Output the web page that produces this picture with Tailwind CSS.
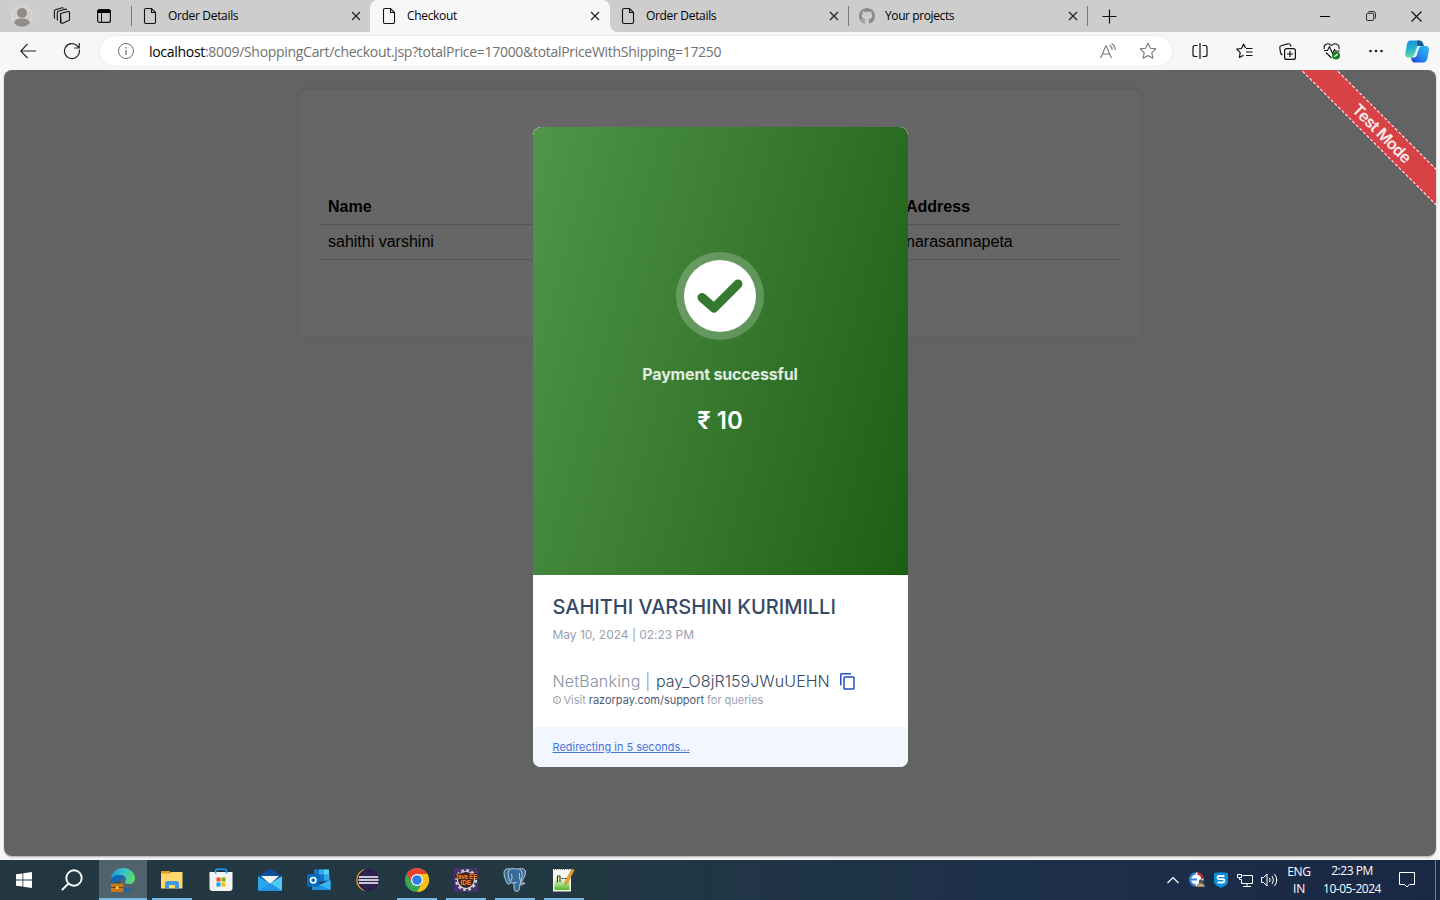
<!DOCTYPE html>
<html lang="en">
<head>
<meta charset="utf-8">
<title>Checkout</title>
<script src="https://cdn.jsdelivr.net/npm/@tailwindcss/browser@4"></script>
</head>
<body class="w-[1440px] h-[900px] overflow-hidden flex flex-col bg-[#f7f7f7] font-['Open_Sans','Noto_Sans',sans-serif] text-black">
<svg class="hidden">
  <symbol id="page" viewBox="0 0 14 18"><path d="M1.500 3a1.500 1.500 0 0 1 1.500-1.500h5.500l4 4v9.500a1.500 1.500 0 0 1-1.500 1.500H3a1.500 1.500 0 0 1-1.500-1.500zM8.500 1.500v4h4" fill="none" stroke="#111" stroke-width="1.100"/></symbol>
  <symbol id="x" viewBox="0 0 10 10"><path d="M1 1l8 8M9 1L1 9" fill="none" stroke="#222" stroke-width="1.200"/></symbol>
</svg>

<!-- Tab strip -->
<header class="h-8 shrink-0 flex bg-[#cdcdcd] text-[12px]">
  <div class="w-[131px] flex items-center pl-[11px]">
    <svg class="w-[22px] h-[22px]" viewBox="0 0 22 22"><circle cx="11" cy="11" r="10.500" fill="#d3d0cd" stroke="#dcdad7"/><circle cx="11" cy="8" r="5" fill="#918c88"/><path d="M3 18c1-3.500 4-4.500 8-4.500s7 1 8 4.500a10.500 10.500 0 0 1-16 0z" fill="#918c88"/></svg>
    <svg class="w-[18px] h-[18px] ml-5" viewBox="0 0 18 18" fill="none" stroke="#111" stroke-width="1.100" stroke-linejoin="round"><path d="M7.500 6.500l7.500-2q1.500-.2 1.500 1.200v6.800q0 .8-.8 1.100l-6 2.600q-1.700.5-1.700-1zM4.800 13.500q-.5-.3-.5-1V5.500q0-1 1-1.300l6.800-2q1.200-.2 1.500.8M2 11.500q-.6-.4-.6-1.200V4q0-1 1-1.300L9 .8q1-.2 1.400.6"/><path d="M7.500 7v9"/></svg>
    <svg class="w-4 h-4 ml-[25px]" viewBox="0 0 16 16"><rect x="1.600" y="1.600" width="12.800" height="12.800" rx="2" fill="none" stroke="#111" stroke-width="1.200"/><path d="M1.500 5V3.500a2 2 0 0 1 2-2h9a2 2 0 0 1 2 2V5z" fill="#000"/><path d="M5.500 5v9.500" stroke="#111"/></svg>
  </div>
  <div class="w-px h-5 mt-1.5 bg-[#777]"></div>
  <div class="w-[238px] flex items-center pl-[11px] pr-[9.500px] bg-[#cdcdcd]">
    <svg class="w-[14px] h-[18px]"><use href="#page"/></svg><span class="ml-[11px] flex-1 whitespace-nowrap tracking-[-0.33px]">Order Details</span><svg class="w-[10px] h-[10px]"><use href="#x"/></svg>
  </div>
  <div class="w-[240px] flex bg-[#f7f7f7]">
    <div class="w-2 -ml-2 bg-[#cdcdcd] rounded-br-lg"></div>
    <div class="flex-1 flex bg-[#cdcdcd]"><div class="flex-1 flex items-center rounded-t-lg bg-[#f7f7f7] pl-3 pr-[10.500px]">
      <svg class="w-[14px] h-[18px]"><use href="#page"/></svg><span class="ml-[11px] flex-1 whitespace-nowrap tracking-[-0.33px]">Checkout</span><svg class="w-[10px] h-[10px]"><use href="#x"/></svg>
    </div></div>
  </div>
  <div class="w-[238px] flex bg-[#f7f7f7]"><div class="flex-1 flex items-center pl-[11px] pr-[9.500px] bg-[#cdcdcd] rounded-bl-lg">
    <svg class="w-[14px] h-[18px]"><use href="#page"/></svg><span class="ml-[11px] flex-1 whitespace-nowrap tracking-[-0.33px]">Order Details</span><svg class="w-[10px] h-[10px]"><use href="#x"/></svg>
  </div></div>
  <div class="w-px h-5 mt-1.5 bg-[#777]"></div>
  <div class="w-[238px] flex items-center pl-[10px] pr-[9.500px]">
    <svg class="w-4 h-4" viewBox="0 0 16 16"><path fill="#8b8b8b" d="M8 0C3.580 0 0 3.580 0 8c0 3.540 2.290 6.530 5.470 7.590.4.070.55-.17.55-.38 0-.19-.01-.82-.01-1.490-2.010.37-2.530-.49-2.690-.94-.09-.23-.48-.94-.82-1.130-.28-.15-.68-.52-.01-.53.63-.01 1.080.58 1.230.82.72 1.210 1.870.87 2.330.66.070-.52.28-.87.510-1.070-1.780-.2-3.640-.89-3.640-3.950 0-.87.310-1.590.82-2.150-.08-.2-.36-1.020.08-2.120 0 0 .67-.21 2.200.82.64-.18 1.320-.27 2-.27s1.360.09 2 .27c1.530-1.040 2.200-.82 2.200-.82.44 1.100.16 1.920.08 2.120.51.560.82 1.270.82 2.150 0 3.070-1.870 3.750-3.650 3.950.29.25.54.730.54 1.480 0 1.070-.01 1.930-.01 2.200 0 .21.15.46.55.38A8.010 8.010 0 0 0 16 8c0-4.420-3.580-8-8-8z"/></svg>
    <span class="ml-[10px] flex-1 whitespace-nowrap tracking-[-0.4px]">Your projects</span><svg class="w-[10px] h-[10px]"><use href="#x"/></svg>
  </div>
  <div class="w-px h-5 mt-1.5 bg-[#777]"></div>
  <div class="flex-1 flex items-center pl-[14px]">
    <svg class="w-[15px] h-[15px]" viewBox="0 0 15 15"><path d="M7.500 .5v14M.5 7.500h14" stroke="#111" stroke-width="1.200"/></svg>
    <svg class="w-[10px] h-[10px] ml-[203px]" viewBox="0 0 10 10"><path d="M0 5.500h10" stroke="#000"/></svg>
    <svg class="w-[10px] h-[10px] ml-9" viewBox="0 0 11 11" fill="none" stroke="#111"><rect x=".5" y="2.500" width="8" height="8" rx="1.500"/><path d="M2.500 1.200Q3 .5 4 .5h3.500a3 3 0 0 1 3 3V7q0 1-.8 1.500"/></svg>
    <svg class="w-[11px] h-[11px] ml-[35px]" viewBox="0 0 11 11"><path d="M.5 .5l10 10M10.500 .5l-10 10" stroke="#111" stroke-width="1.100"/></svg>
  </div>
</header>

<!-- Address bar -->
<nav class="h-[38px] shrink-0 flex items-center pl-5">
  <svg class="w-4 h-4" viewBox="0 0 16 16" fill="none" stroke="#222" stroke-width="1.100"><path d="M16 8H1M7.500 1L.7 8l6.800 7"/></svg>
  <svg class="w-[18px] h-[18px] ml-[27px]" viewBox="0 0 18 18" fill="none" stroke="#222" stroke-width="1.200"><path d="M16.300 7.500A7.500 7.500 0 1 1 14.500 4L16 5.500M16.200 1v5h-5"/></svg>
  <div class="ml-[19px] w-[1072px] h-[30px] rounded-full bg-white flex items-center pl-[17px] pr-4 shadow-[0_0_2px_#ddd]">
    <svg class="w-[18px] h-[18px]" viewBox="0 0 18 18" fill="none" stroke="#707070"><circle cx="9" cy="9" r="7.500"/><path d="M9 8v5M9 5v1.500" stroke-width="1.300"/></svg>
    <span class="ml-[14px] flex-1 text-[14px] whitespace-nowrap tracking-[-0.3px] text-[#707070]"><span class="text-black">localhost</span>:8009/ShoppingCart/checkout.jsp?totalPrice=17000&amp;totalPriceWithShipping=17250</span>
    <svg class="w-4 h-4" viewBox="0 0 16 16" fill="none" stroke="#777" stroke-width="1.100"><path d="M.7 15L5.700 3h.6l5 12M2.500 11h7M9.500 2q2.500 1.500 2.700 5M11.500 .5q3.500 2 3.700 6.500"/></svg>
    <svg class="w-[18px] h-[18px] ml-[23px] -mr-px" viewBox="0 0 18 18" fill="none" stroke="#777" stroke-width="1.100" stroke-linejoin="round"><path d="M9 1.200l2.400 5 5.400.7-4 3.800 1 5.500L9 13.600l-4.800 2.600 1-5.500-4-3.800 5.400-.7z"/></svg>
  </div>
  <svg class="w-4 h-4 ml-[19.500px]" viewBox="0 0 16 16" fill="none" stroke="#111" stroke-width="1.200"><path d="M5.500 2.500H3a2 2 0 0 0-2 2v7a2 2 0 0 0 2 2h2.500M10.500 2.500H13a2 2 0 0 1 2 2v7a2 2 0 0 1-2 2h-2.500M8 0v16"/></svg>
  <svg class="w-[17px] h-4 ml-7" viewBox="0 0 17 16" fill="none" stroke="#111" stroke-width="1.200" stroke-linejoin="round"><path d="M9.500 5L7.600 1 5.500 5.500 .8 6.200l3.400 3.400-.8 4.900 4.200-2.300M10 5.500h6.500M10 9h6.500M10 12.500h6.500"/></svg>
  <svg class="w-[17px] h-[17px] ml-[26.500px]" viewBox="0 0 17 17" fill="none" stroke="#111" stroke-width="1.200"><rect x="5.600" y="5.600" width="10.800" height="10.800" rx="2"/><path d="M11 8v6M8 11h6M3.500 12Q2 11.500 1.500 9.500L.8 5q-.2-2 1.700-2.500L9 .8q2-.3 2.700 1.500L12 3.500"/></svg>
  <svg class="w-[18px] h-[18px] ml-[26.500px]" viewBox="0 0 18 18" fill="none" stroke="#111" stroke-width="1.100"><path d="M8.500 16L3 10.500M1.200 7Q.5 3.500 3 2.200 6 .8 8.500 3.500 11 .8 14 2.200q2.800 1.500 2 5M1 8.500h3.500l2-4 3 7 2-4 1 1.500h4"/><circle cx="13" cy="13.500" r="4" fill="#1a7f1e" stroke="none"/><path d="M11.200 14.800l3.600-2.800" stroke="#fff" stroke-width="1.300"/></svg>
  <svg class="w-[14px] h-4 ml-[28px]" viewBox="0 0 14 16" fill="#222"><circle cx="1.500" cy="8" r="1.300"/><circle cx="7" cy="8" r="1.300"/><circle cx="12.500" cy="8" r="1.300"/></svg>
  <svg class="w-6 h-[23px] ml-[22.500px]" viewBox="0 0 24 23">
    <defs><linearGradient id="cpa" x1="0" y1="0" x2=".2" y2="1"><stop stop-color="#1c8ce0"/><stop offset=".5" stop-color="#20b2cf"/><stop offset="1" stop-color="#69dba0"/></linearGradient><linearGradient id="cpb" x1="1" y1="0" x2="0" y2="1"><stop stop-color="#27c0f0"/><stop offset=".55" stop-color="#2685f1"/><stop offset="1" stop-color="#233bc8"/></linearGradient></defs>
    <path d="M5 .5h9q3 0 4 3l1 3.500h-3q-2 0-3 2l-2.500 6q-1 2.500-4 2.500H3Q0 17.500.3 13.500L2 4Q2.700.5 5 .5z" fill="url(#cpa)"/>
    <path d="M12 .5h2q3 0 4 3l1 3.500h-3q-2 0-3 2z" fill="#17588d"/>
    <path d="M19 6h2q3 0 3 4l-1.500 8Q21.500 22.500 18 22.500H9q-2 0-3-5 3.500 0 4.500-2.500L13 9q1-3 4-3z" fill="url(#cpb)"/><path d="M12.500 6h4q-2.200.5-2.900 3L11.800 15q-.8 2.500-3.300 2.500l-2-.3q2.200-.2 3-2.700z" fill="#fff"/>
  </svg>
</nav>

<!-- Page -->
<main class="relative mx-1 h-[786px] shrink-0 rounded-lg overflow-hidden bg-[#636363] pt-5 shadow-[0_1px_2px_#aaa] font-['Liberation_Sans',Arial,sans-serif] text-[16px]">
  <section class="mx-auto w-[840px] h-[247px] rounded-lg bg-[#666] shadow-[0_0_10px_rgba(0,0,0,0.06)] px-5 pt-[99px]">
    <div class="h-9 flex items-center px-2 border-b border-[#555] font-bold"><span class="w-[578px]">Name</span><span>Address</span></div>
    <div class="h-[35px] flex items-center px-2 border-b border-[#555]"><span class="w-[578px]">sahithi varshini</span><span>narasannapeta</span></div>
  </section>

  <!-- Test mode ribbon -->
  <div class="absolute left-[1247.500px] top-[50px] w-[260px] h-[26px] rotate-45 bg-[#d64246] border-y border-dashed border-white flex items-center justify-center text-[#fbeaea] text-[16px] font-semibold font-[Inter,sans-serif] tracking-[-0.65px]">Test Mode</div>

  <!-- Payment dialog -->
  <div class="absolute left-[529px] top-[57px] w-[375px] h-[640px] rounded-lg overflow-hidden bg-white flex flex-col font-[Inter,sans-serif]">
    <div class="h-[448px] flex flex-col items-center pt-[125px] pr-px bg-[linear-gradient(105deg,#4f954a_0%,#37792f_50%,#1c5f14_100%)] rounded-t-lg">
      <svg class="w-[88px] h-[88px]" viewBox="0 0 88 88"><circle cx="44" cy="44" r="44" fill="#fff" fill-opacity=".22"/><circle cx="44" cy="44" r="36" fill="#fff"/><path d="M26 45.500L38 56 62 32" fill="none" stroke="#35782f" stroke-width="9" stroke-linecap="round" stroke-linejoin="round"/></svg>
      <div class="mt-[22px] h-6 leading-6 text-[16px] font-bold tracking-[-0.17px] text-white/85">Payment successful</div>
      <div class="mt-[19px] h-8 leading-8 text-[24px] font-semibold text-white whitespace-nowrap">₹ 10</div>
    </div>
    <div class="h-[152px] pl-[19.500px] pt-[18px] flex flex-col whitespace-nowrap">
      <div class="h-7 leading-7 text-[20px] font-medium text-[#364965] tracking-[-0.02px]">SAHITHI VARSHINI KURIMILLI</div>
      <div class="mt-[5px] h-[18px] leading-[18px] text-[12px] text-[#98a2b3] tracking-[-0.02px]">May 10, 2024 | 02:23 PM</div>
      <div class="mt-[25px] h-6 flex items-center text-[16px] font-light">
        <span class="text-[#8792a5] tracking-[0.2px]">NetBanking |</span><span class="ml-[5.500px] text-[#364965] tracking-[0.05px]">pay_O8jR159JWuUEHN</span>
        <svg class="ml-[10px] w-[15px] h-[17px]" viewBox="0 0 15 17" fill="none" stroke="#1f4fc4" stroke-width="1.500"><rect x="4" y="4" width="10" height="12" rx=".8"/><path d="M.8 12.500V1.500q0-.7.7-.7H11"/></svg>
      </div>
      <div class="-mt-px h-4 flex items-center text-[11px] text-[#98a2b3] tracking-[-0.02px]">
        <svg class="w-2 h-2 mr-[3px]" viewBox="0 0 8 8" fill="none" stroke="#777" stroke-width=".8"><circle cx="4" cy="4" r="3.500"/><path d="M4 3.500V6M4 2v.8"/></svg>
        <span>Visit <span class="text-[#4b5b78]">razorpay.com/support</span> for queries</span>
      </div>
    </div>
    <div class="h-10 pl-[19.500px] flex items-center bg-[#f2f7ff] text-[11px] text-[#4a74d4]"><span class="underline tracking-[-0.02px]">Redirecting in 5 seconds...</span></div>
  </div>
</main>
<div class="h-1 shrink-0 bg-[#f5f5f7]"></div>

<!-- Taskbar -->
<footer class="h-10 shrink-0 flex bg-[linear-gradient(90deg,#223741_0%,#223842_40%,#1d304a_70%,#192845_100%)] text-white">
  <div class="w-12 flex items-center justify-center"><svg class="w-4 h-4" viewBox="0 0 16 16" fill="#fff"><path d="M0 2.300l6.500-.9v6.200H0zM7.300 1.300L16 0v7.600H7.300zM0 8.400h6.500v6.200L0 13.700zM7.300 8.400H16V16l-8.700-1.300z"/></svg></div>
  <div class="w-[51px] flex items-center pl-[13px]"><svg class="w-[22px] h-[22px]" viewBox="0 0 22 22" fill="none" stroke="#fff" stroke-width="1.900"><circle cx="13" cy="9" r="7.700"/><path d="M7.500 14.500L.8 21.200"/></svg></div>
  <div class="w-12 flex flex-col items-center bg-[#50636c] border-b-2 border-[#76b9ed] pt-2">
    <svg class="w-6 h-6" viewBox="0 0 24 24"><defs><linearGradient id="ed" x1="0" y1=".3" x2="1" y2=".5"><stop stop-color="#2299dc"/><stop offset=".5" stop-color="#35c1d0"/><stop offset="1" stop-color="#62dc60"/></linearGradient></defs><path d="M0 12C0 5 5 0 12 0s12 5 12 10c0 4-3 6-6 6s-4-1-4-2 1-1.500 1-3-2-4-5-4-8 2-10 5z" fill="url(#ed)"/><path d="M0 12c1-3.500 4-5 7-5 4 0 7 2 7 4-3-1-5 1-5 4 0 4 4 6 8 6 2 0 4-.5 5.500-1.500Q19 24 12 24 1 24 0 12z" fill="#1266b5"/><rect y="15.500" width="12.500" height="8.500" rx=".8" fill="#c47a1c"/><path d="M0 19.500h12.500M4 15.500v-1.300h4.500v1.300" stroke="#754008" fill="none"/><rect x="5" y="18.500" width="2.500" height="2.500" fill="#ffd348"/></svg>
  </div>
  <div class="w-[49px] pl-[5px] flex"><div class="w-10 border-b-2 border-[#76b9ed] flex justify-center pt-2"><svg class="w-6 h-6" viewBox="0 0 24 24"><path d="M1 3h9v3H1z" fill="#e09c12"/><path d="M1 5.500h8.500l1.500-1.500h11.500v16.500H1z" fill="#ffd76e"/><path d="M5 20.500v-5q0-2.500 2.500-2.500h9q2.500 0 2.500 2.500v5h-4V17h-6v3.500z" fill="#3d9be0"/></svg></div></div>
  <div class="w-[49px] flex justify-center pt-2"><svg class="w-6 h-6" viewBox="0 0 24 24"><path d="M6.500 6V3q0-1.800 1.800-1.800h7.400q1.800 0 1.800 1.800v3" fill="none" stroke="#22a0ef" stroke-width="1.600"/><path d="M.5 4h23v16q0 3-3 3h-17q-3 0-3-3z" fill="#f3f3f3"/><path d="M6.500 5.500V4M17.500 5.500V4" stroke="#22a0ef" stroke-width="1.600"/><path d="M7.500 9.500h4v4h-4z" fill="#f25022"/><path d="M12.500 9.500h4v4h-4z" fill="#7fba00"/><path d="M7.500 14.500h4v4h-4z" fill="#00a4ef"/><path d="M12.500 14.500h4v4h-4z" fill="#ffb900"/></svg></div>
  <div class="w-[49px] flex justify-center pt-2"><svg class="w-6 h-6" viewBox="0 0 24 24"><path d="M0 8L12 .8 24 8v4H0z" fill="#0d4f9b"/><path d="M3 8h18l-9 8z" fill="#f3f3f3"/><path d="M0 8.200l24 14.600H0z" fill="#29a9ea"/><path d="M24 8.200V22.800L12 15.500z" fill="#4ccbf6"/><path d="M0 22.800l12-7.300 12 7.300z" fill="#2595e8"/></svg></div>
  <div class="w-[49px] flex justify-center pt-2"><svg class="w-6 h-6" viewBox="0 0 24 24"><path d="M7 1.500h15v12H7z" fill="#1574c4"/><path d="M12 1.500h5v5h-5zM17 6.500h5.500v6H17z" fill="#32a9ea"/><path d="M17 1.500h5v5h-5z" fill="#55d2f7"/><path d="M5 12l9 5 9.500-5v10H5z" fill="#1e8ee0"/><path d="M23.500 12v10L12 17z" fill="#38b5ee"/><rect y="6" width="12.500" height="12.500" rx="1" fill="#0669be"/><circle cx="6.200" cy="12.200" r="2.700" fill="none" stroke="#fff" stroke-width="1.700"/></svg></div>
  <div class="w-[49px] flex justify-center pt-2 pr-px"><svg class="w-6 h-6" viewBox="0 0 24 24"><path d="M11 .8A11.300 11.300 0 0 0 11 23.200Q2.500 19 2.500 12T11 .8z" fill="#f7962b"/><circle cx="13.600" cy="12" r="10.200" fill="#2c2255" stroke="#17152d" stroke-width=".5"/><path d="M3.800 9h19.400M3.400 12h20.300M3.800 15h19.400" stroke="#fff" stroke-width="1.500"/></svg></div>
  <div class="w-[49px] flex pl-[5px]"><div class="w-10 border-b-2 border-[#76b9ed] flex justify-center pt-2"><svg class="w-6 h-6" viewBox="0 0 24 24"><circle cx="12" cy="12" r="12" fill="#34a853"/><path d="M1.600 6A12 12 0 0 1 22.400 6H12L6.800 15z" fill="#ea4335"/><path d="M22.400 6A12 12 0 0 1 12 24l5.200-9L12 6z" fill="#fbc116"/><circle cx="12" cy="12" r="6" fill="#fff"/><circle cx="12" cy="12" r="4.800" fill="#2f7de9"/></svg></div></div>
  <div class="w-[49px] flex pl-[5px]"><div class="w-10 border-b-2 border-[#76b9ed] flex justify-center pt-2"><svg class="w-6 h-6 overflow-visible" viewBox="0 0 24 24"><path d="M0 0h24v24H0z" fill="#482f70"/><circle cx="12" cy="12" r="9.800" fill="none" stroke="#ccc" stroke-width="2.600" stroke-dasharray="2.800 2.330"/><circle cx="12" cy="12" r="8.500" fill="#302729" stroke="#ddd" stroke-width="1.200"/><path d="M1 5.500h22v5.500H1zM6 11h12v6H6z" fill="#4a2016"/><g font-family="Liberation Sans" font-weight="bold" font-size="7.500" fill="#f08a2c"><text x="1" y="10.800" textLength="22" lengthAdjust="spacingAndGlyphs">Java EE</text><text x="6.500" y="16.700" textLength="11" lengthAdjust="spacingAndGlyphs">IDE</text></g></svg></div></div>
  <div class="w-[49px] flex pl-[5px]"><div class="w-10 border-b-2 border-[#76b9ed] flex justify-center pt-2"><svg class="w-6 h-6" viewBox="0 0 24 24" fill="#386d9b" stroke="#c2d3df" stroke-width=".9" stroke-linejoin="round"><path d="M7 1Q2-.5 1 4q-.5 3 2 9 1.500 4 3 3.200Q7.500 15 8.500 13.500M16 1q5-1.500 6.500 2 .8 4-3.500 10l-1.500 2 4-.2q1 .7-2 1.900h-3"/><path d="M7 1q4-1 6 0 4-1.500 6 3 1 3-1 9l-1 3q-.5 7-2.500 7.500-3 .5-3.500-3V15q-4 1-4.500-2Q3.500 3 7 1z"/><path d="M8 13q2-4 .5-7M16.500 5q-1 3 1 8M11 15q1-1 3-.5" fill="none"/></svg></div></div>
  <div class="w-[49px] flex pl-[5px]"><div class="w-10 border-b-2 border-[#76b9ed] flex justify-center pt-2"><svg class="w-6 h-6" viewBox="0 0 24 24"><defs><linearGradient id="np" x2="0" y2="1"><stop stop-color="#fff"/><stop offset=".4" stop-color="#e8f6cf"/><stop offset="1" stop-color="#55b825"/></linearGradient></defs><path d="M1 1h18v22.500H1z" fill="#f7f7f4"/><path d="M2.500 4h15v18h-15z" fill="url(#np)"/><path d="M2 1.500h15" stroke="#888" stroke-dasharray="1 1"/><path d="M5.500 14.500V8H8v6M9.500 10.500h2M12.500 10.500h2" stroke="#333" stroke-width="1.100" fill="none"/><path d="M20 .8l2.500 1.200-7 13-2.500 2 .2-3.500z" fill="#f0a527" stroke="#9c6423" stroke-width=".5"/></svg></div></div>

  <div class="flex-1 flex items-center justify-end">
    <svg class="w-3 h-2" viewBox="0 0 12 8" fill="none" stroke="#fff" stroke-width="1.200"><path d="M.5 7L6 1.500 11.500 7"/></svg>
    <svg class="w-4 h-4 ml-[10px]" viewBox="0 0 16 16"><circle cx="7.500" cy="7.500" r="7" fill="#fff"/><path d="M7 1.500A6 6 0 0 0 7 13.500M2 7.500h6" fill="none" stroke="#2f83dc" stroke-width="2.200"/><path d="M8.500 1.600q4.500.5 5 5.400" fill="none" stroke="#c9202b" stroke-width="2.200"/><circle cx="12" cy="9.500" r="2.200" fill="#555"/><path d="M8 15q.5-4 4-4t4 4z" fill="#bda878" stroke="#444" stroke-width=".6"/></svg>
    <svg class="w-[14px] h-4 ml-[9px]" viewBox="0 0 14 16"><path d="M0 1Q7-.5 14 1v9q0 3-7 6-7-3-7-6z" fill="#0b8fdb"/><path d="M10.500 4H5Q3.500 4 3.500 5.500T5 7.200h4q1.500 0 1.500 1.500T9 10.500H3.500" fill="none" stroke="#fff" stroke-width="1.800"/></svg>
    <svg class="w-4 h-[14px] ml-[9px]" viewBox="0 0 16 14" fill="none" stroke="#fff"><path d="M5.500 2.500h10v8H4.500v-4M10 10.500v3M6 13.500h8M.5 1.500h4v3h-4zM2.500 4.500V6.500h2"/></svg>
    <svg class="w-[17px] h-[14px] ml-2" viewBox="0 0 17 14" fill="none" stroke="#fff"><path d="M.5 4.500h2L6 1v12L2.500 9.500h-2zM8.500 5q1.500 2 0 4M11 3q3 4 0 8M13.500 1q4.500 6 0 12"/></svg>
    <div class="ml-[9px] w-6 text-center text-[12px] leading-[17px] tracking-[-0.3px]">ENG<br>IN</div>
    <div class="ml-[9px] w-[64px] text-center text-[12px] leading-[18px] tracking-[-0.47px] whitespace-nowrap">2:23 PM<br>10-05-2024</div>
    <svg class="w-4 h-4 ml-[15px]" viewBox="0 0 16 16" fill="none" stroke="#fff"><path d="M.5 .5h15v12H10.500L8 15l-2.500-2.500h-5z"/></svg>
    <div class="ml-5 w-px h-10 bg-[#71808f] mr-1"></div>
  </div>
</footer>
</body>
</html>
